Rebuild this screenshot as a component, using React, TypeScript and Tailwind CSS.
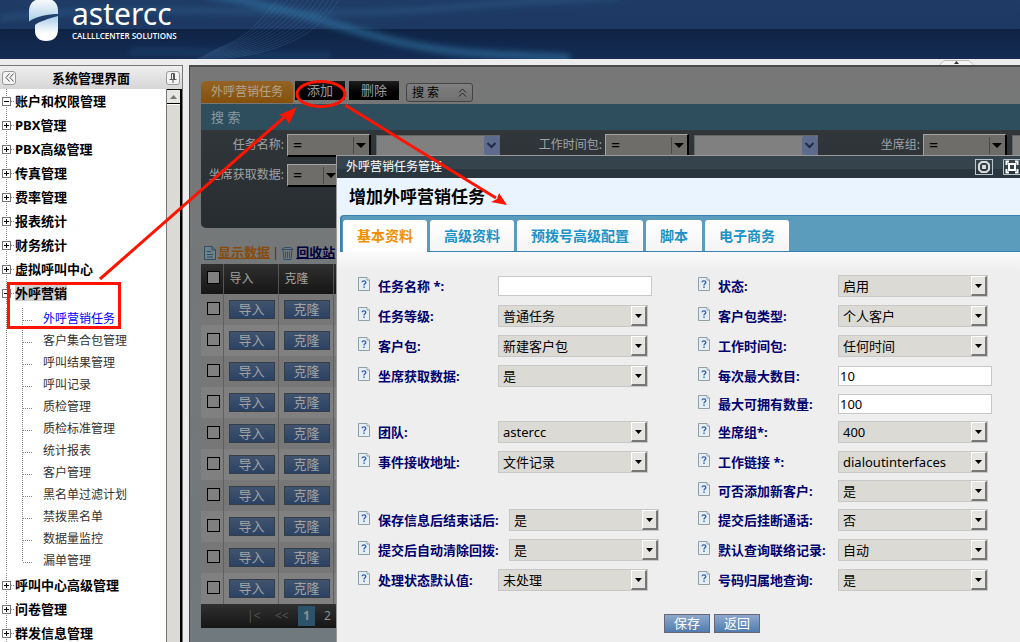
import React, { useState } from 'react';

interface Field {
  label: string;
  type: 'input' | 'select';
  value: string;
  wide?: boolean;
}

interface FormRow {
  height: string;
  left?: Field;
  right?: Field;
}

const topMenus = ['账户和权限管理', 'PBX管理', 'PBX高级管理', '传真管理', '费率管理', '报表统计', '财务统计', '虚拟呼叫中心'];
const bottomMenus = ['呼叫中心高级管理', '问卷管理', '群发信息管理'];
const subMenus = [
  '外呼营销任务',
  '客户集合包管理',
  '呼叫结果管理',
  '呼叫记录',
  '质检管理',
  '质检标准管理',
  '统计报表',
  '客户管理',
  '黑名单过滤计划',
  '禁拨黑名单',
  '数据量监控',
  '漏单管理',
];

const tabs = ['基本资料', '高级资料', '预拨号高级配置', '脚本', '电子商务'];

const rows: FormRow[] = [
  {
    height: 'h-[30px]',
    left: { label: '任务名称 *:', type: 'input', value: '' },
    right: { label: '状态:', type: 'select', value: '启用' },
  },
  {
    height: 'h-[30px]',
    left: { label: '任务等级:', type: 'select', value: '普通任务' },
    right: { label: '客户包类型:', type: 'select', value: '个人客户' },
  },
  {
    height: 'h-[30px]',
    left: { label: '客户包:', type: 'select', value: '新建客户包' },
    right: { label: '工作时间包:', type: 'select', value: '任何时间' },
  },
  {
    height: 'h-[30px]',
    left: { label: '坐席获取数据:', type: 'select', value: '是' },
    right: { label: '每次最大数目:', type: 'input', value: '10' },
  },
  { height: 'h-[26px]', right: { label: '最大可拥有数量:', type: 'input', value: '100' } },
  {
    height: 'h-[30px]',
    left: { label: '团队:', type: 'select', value: 'astercc' },
    right: { label: '坐席组*:', type: 'select', value: '400' },
  },
  {
    height: 'h-[30px]',
    left: { label: '事件接收地址:', type: 'select', value: '文件记录' },
    right: { label: '工作链接 *:', type: 'select', value: 'dialoutinterfaces' },
  },
  { height: 'h-[28px]', right: { label: '可否添加新客户:', type: 'select', value: '是' } },
  {
    height: 'h-[30px]',
    left: { label: '保存信息后结束话后:', type: 'select', value: '是', wide: true },
    right: { label: '提交后挂断通话:', type: 'select', value: '否' },
  },
  {
    height: 'h-[30px]',
    left: { label: '提交后自动清除回拨:', type: 'select', value: '是', wide: true },
    right: { label: '默认查询联络记录:', type: 'select', value: '自动' },
  },
  {
    height: 'h-[30px]',
    left: { label: '处理状态默认值:', type: 'select', value: '未处理' },
    right: { label: '号码归属地查询:', type: 'select', value: '是' },
  },
];

const Logo: React.FC = () => (
  <svg width="32" height="43" viewBox="0 0 32 43" className="shrink-0">
    <defs>
      <linearGradient id="logoTop" x1="0" y1="0" x2="0" y2="1">
        <stop offset="0" stopColor="#ffffff" />
        <stop offset="1" stopColor="#a9cde6" />
      </linearGradient>
      <linearGradient id="logoBottom" x1="0" y1="0" x2="0" y2="1">
        <stop offset="0" stopColor="#a9cbe8" />
        <stop offset="0.7" stopColor="#ffffff" />
      </linearGradient>
    </defs>
    <path d="M1 21.5V12C1 4 5-1 15-2C25-2 30 3 30 10V14C20 14 9 16 1 21.5Z" fill="url(#logoTop)" />
    <path d="M7 25C12 21 20 19 30 16V29C30 37 26 41 18 41C11 41 7 37 7 31Z" fill="url(#logoBottom)" />
  </svg>
);

const Banner: React.FC = () => (
  <header className="relative h-[59px] shrink-0 overflow-hidden bg-[linear-gradient(to_bottom,#1f3b66_0,#1d3862_29px,#0f2445_29px,#142b53_59px)]">
    <svg className="absolute inset-0 h-full w-full" viewBox="0 0 1020 59" preserveAspectRatio="none">
      <defs>
        <filter id="glow" x="-10%" y="-100%" width="120%" height="300%">
          <feGaussianBlur stdDeviation="3" />
        </filter>
      </defs>
      <g fill="none" stroke="#2f6f9c" filter="url(#glow)">
        <path d="M0 18C150 0 300 20 430 9S560 2 620 -4" strokeWidth="4" opacity="0.5" />
        <path d="M205 -6C270 4 300 14 364 33S470 54 570 58" strokeWidth="7" opacity="0.75" />
        <path d="M130 52C200 48 260 60 330 56" strokeWidth="5" opacity="0.3" />
      </g>
      <g fill="none" stroke="#5d8fbd" strokeWidth="0.7" opacity="0.3">
        {Array.from({ length: 13 }, (_, i) => (
          <path key={i} d={`M${340 - i * 5} -2C${322 - i * 5} ${26 - i} ${292 - i * 3} ${58 - i * 2} ${195 + i * 2} ${60 - i}`} />
        ))}
      </g>
    </svg>
    <div className="relative flex items-start pl-7">
      <Logo />
      <div className="pl-3 text-white">
        <div className="font-['Noto_Sans','Open_Sans',sans-serif] text-[30px] leading-[28px]">astercc</div>
        <div className="pt-[2px] font-['Open_Sans','Noto_Sans',sans-serif] text-[8px] font-semibold leading-[12px]">CALLLLCENTER SOLUTIONS</div>
      </div>
    </div>
  </header>
);

const TreeItem: React.FC<{ label: string; open?: boolean; selected?: boolean }> = ({ label, open, selected }) => (
  <li className="flex h-6 items-center">
    <svg width="15" height="24" className="shrink-0">
      <path d="M6.5 0V24M11 12.5H15" stroke="#888" strokeDasharray="1 1" />
      <rect x="2.5" y="8.5" width="8" height="8" fill="#fff" stroke="#777" />
      <path d={open ? 'M4 12.5H9' : 'M4 12.5H9M6.5 10V15'} stroke="#000" />
    </svg>
    <a href="#" className={`text-[13px] font-bold leading-[16px] text-black ${selected ? 'bg-[#cfcfcf]' : ''}`}>
      {label}
    </a>
  </li>
);

const Sidebar: React.FC = () => (
  <aside className="flex w-[183px] shrink-0 flex-col border-r border-t border-[#777] bg-white">
    <div className="flex h-[23px] shrink-0 items-center justify-between bg-linear-to-b from-[#efefef] to-[#d6d6d6] px-[2px]">
      <button aria-label="收起" className="flex h-[14px] w-[14px] items-center justify-center rounded-[3px] border border-[#999] bg-[#f3f3f3]">
        <svg width="9" height="9" fill="none" stroke="#555">
          <path d="M4.5 0.5L1 4.5L4.5 8.5M8.5 0.5L5 4.5L8.5 8.5" />
        </svg>
      </button>
      <h2 className="text-[13px] font-bold leading-[18px]">系统管理界面</h2>
      <button aria-label="固定" className="flex h-[14px] w-[14px] items-center justify-center rounded-[3px] border border-[#999] bg-[#f3f3f3]">
        <svg width="8" height="10" fill="none" stroke="#555">
          <path d="M2.5 6V0.5H5.5V6M4.5 1V6M0.5 6.5H7.5M4 7V10" />
        </svg>
      </button>
    </div>
    <div className="flex min-h-0 flex-1">
      <nav className="min-w-0 flex-1 overflow-hidden">
        <ul>
          {topMenus.map((m, i) => (
            <TreeItem key={m} label={m} open={i === 0} />
          ))}
          <TreeItem label="外呼营销" open selected />
        </ul>
        <ul className="pb-px pt-[3px]">
          {subMenus.map((m, i) => (
            <li key={m} className="flex h-[22px] items-center">
              <svg width="43" height="22" className="shrink-0">
                <path
                  d={i === subMenus.length - 1 ? 'M6.5 0V22M22.5 0V12M23 12.5H32' : 'M6.5 0V22M22.5 0V22M23 12.5H32'}
                  stroke="#888"
                  strokeDasharray="1 1"
                  fill="none"
                />
              </svg>
              <a href="#" className={`text-xs ${i === 0 ? 'text-[#0000ff]' : 'text-[#333]'}`}>
                {m}
              </a>
            </li>
          ))}
        </ul>
        <ul>
          {bottomMenus.map((m) => (
            <TreeItem key={m} label={m} />
          ))}
        </ul>
      </nav>
      <div className="w-[16px] shrink-0 border-l border-r-2 border-l-[#777] border-r-black bg-[#dbdad4]">
        <div className="flex h-[15px] items-center justify-center border-b border-t border-black bg-[#e6e5e0]">
          <svg width="7" height="4">
            <path d="M0 4L3.5 0L7 4Z" fill="#777" />
          </svg>
        </div>
        <div className="h-px bg-white" />
      </div>
    </div>
  </aside>
);

const DimSelect: React.FC<{ label: string; width: string }> = ({ label, width }) => (
  <span className={`relative flex h-[23px] shrink-0 ${width}`}>
    <select
      aria-label={label}
      className="w-full appearance-none border-b-2 border-l border-r-2 border-t border-b-black border-l-[#a5a39f] border-r-black border-t-[#a5a39f] bg-[#6f6d69] pl-[5px] text-base leading-[18px] text-black"
    >
      <option>=</option>
    </select>
    <svg width="18" height="19" className="pointer-events-none absolute right-0 top-[2px]">
      <path d="M0.5 1V18" stroke="#4a4a48" />
      <path d="M3 7H13L8 12Z" fill="#000" />
    </svg>
  </span>
);

const Combo: React.FC<{ label: string }> = ({ label }) => (
  <span className="relative flex h-[21px] w-[124px] shrink-0">
    <input aria-label={label} className="w-full border border-[#666] bg-[#808080] px-1 text-xs" />
    <span className="pointer-events-none absolute right-px top-px flex h-[19px] w-[15px] items-center justify-center rounded-[2px] bg-[#5d6b8c]">
      <svg width="9" height="7" fill="none" stroke="#202b45" strokeWidth="2">
        <path d="M0.5 1L4.5 5L8.5 1" />
      </svg>
    </span>
  </span>
);

const SearchField: React.FC<{ label: string }> = ({ label }) => (
  <div className="flex w-[318px] shrink-0 items-center">
    <span className="w-[83px] shrink-0 text-right text-xs text-[#a0a3a5]">{label}</span>
    <div className="flex items-center gap-[5px] pl-[3px]">
      <DimSelect label={`${label} 条件`} width="w-[84px]" />
      <Combo label={label} />
    </div>
  </div>
);

const TaskList: React.FC = () => (
  <table className="w-[800px] table-fixed border-collapse text-[13px] text-[#a3a3a3]">
    <colgroup>
      <col className="w-[22px]" />
      <col className="w-[55px]" />
      <col className="w-[55px]" />
      <col />
    </colgroup>
    <thead>
      <tr className="h-[30px] bg-linear-to-b from-[#303030] to-[#161616] text-left">
        <th className="border-r border-[#555] pb-[3px]">
          <input type="checkbox" aria-label="全选" className="ml-[6px] block h-[13px] w-[13px] appearance-none border border-black bg-[#808080]" />
        </th>
        <th className="border-r border-[#555] pl-[6px] text-xs font-normal">导入</th>
        <th className="border-r border-[#555] pl-[6px] text-xs font-normal">克隆</th>
        <th />
      </tr>
    </thead>
    <tbody>
      {Array.from({ length: 10 }, (_, i) => (
        <tr key={i} className="h-[31px] odd:bg-[#777] even:bg-[#808080]">
          <td className="border-r border-[#606060] pb-[3px]">
            <input type="checkbox" aria-label={`选择第${i + 1}行`} className="ml-[6px] block h-[13px] w-[13px] appearance-none border border-black bg-[#808080]" />
          </td>
          {['导入', '克隆'].map((t) => (
            <td key={t} className="border-r border-[#606060] pb-px pl-[5px]">
              <button className="block h-[19px] w-[46px] border border-[#353d47] bg-linear-to-b from-[#41546f] to-[#2b4264] text-[13px] leading-[17px]">{t}</button>
            </td>
          ))}
          <td />
        </tr>
      ))}
    </tbody>
  </table>
);

const Background: React.FC = () => (
  <div className="pl-[11px] pt-[14px]">
    <div className="flex h-[23px] items-start">
      <button className="h-[22px] w-[92px] rounded-t-[5px] bg-linear-to-b from-[#946323] to-[#85500a] text-xs text-[#b3a48f]">外呼营销任务</button>
      <button className="ml-[2px] h-[19px] w-[50px] bg-linear-to-b from-[#1e1e1e] to-black text-[13px] leading-[19px] text-[#9c9c9c]">添加</button>
      <button className="ml-1 h-[19px] w-[50px] bg-linear-to-b from-[#1e1e1e] to-black text-[13px] leading-[19px] text-[#9c9c9c]">删除</button>
      <button className="ml-[7px] mt-[2px] flex h-[19px] w-[67px] items-center justify-between rounded-[3px] border border-[#444] bg-linear-to-b from-[#808080] to-[#707070] px-[5px] text-xs text-black">
        搜 索
        <svg width="9" height="9" fill="none" stroke="#222">
          <path d="M1 4.5L4.5 1L8 4.5M1 8.5L4.5 5L8 8.5" />
        </svg>
      </button>
    </div>
    <section className="h-[124px] w-[1200px] rounded-bl-[5px] bg-linear-to-b from-[#34393e] to-[#262c30]">
      <h3 className="h-[26px] bg-[#2e4d5d] pl-[10px] text-[13px] leading-[26px] text-[#8b9aa2]">搜 索</h3>
      <div className="flex h-[30px] items-center">
        <SearchField label="任务名称:" />
        <SearchField label="工作时间包:" />
        <SearchField label="坐席组:" />
      </div>
      <div className="flex h-[30px] items-center">
        <span className="w-[83px] shrink-0 text-right text-xs text-[#a0a3a5]">坐席获取数据:</span>
        <div className="flex pl-[3px]">
          <DimSelect label="坐席获取数据 条件" width="w-[54px]" />
        </div>
      </div>
    </section>
    <div className="flex h-[36px] items-end gap-[2px] pb-[2px] pl-[3px] text-[13px] font-bold leading-[20px]">
      <svg width="12" height="14" viewBox="0 0 12 14" fill="#708088" stroke="#2c4f65" className="mb-[2px]">
        <path d="M0.5 0.5H8L11.5 4V13.5H0.5ZM8 0.5V4H11.5M3 5.5H7M3 8.5H9M3 11H9" />
      </svg>
      <a href="#" className="text-[#8a4a08] underline">显示数据</a>
      <span className="font-normal text-[#6d2020]">|</span>
      <svg width="13" height="14" viewBox="0 0 13 14" fill="none" stroke="#2e5268" className="mb-[2px]">
        <path d="M0.5 3.5H12.5M1.5 2.5L4 1.5H9L11.5 2.5M2 4L3 13.5H10L11 4M4.5 5.5V12M6.5 5.5V12M8.5 5.5V12" />
      </svg>
      <a href="#" className="text-[#00003c] underline">回收站</a>
    </div>
    <TaskList />
    <div className="flex h-6 w-[800px] items-center bg-linear-to-b from-[#303030] to-[#161616] pl-[46px] text-xs text-[#8f8f8f]">
      <a href="#" className="w-[28px] text-[#555]">|&lt;</a>
      <a href="#" className="w-[23px] text-[#555]">&lt;&lt;</a>
      <a href="#" className="flex h-5 w-[17px] items-center justify-center bg-[#2c536b] font-bold">1</a>
      <a href="#" className="w-[25px] text-center">2</a>
    </div>
  </div>
);

const HelpIcon: React.FC = () => (
  <svg width="13" height="14" viewBox="0 0 13 14" className="mb-1 shrink-0">
    <path d="M0.5 0.5H9L11.5 3V13.5H0.5Z" fill="#e6eef2" stroke="#8f9fa8" />
    <path d="M9 0.5V3H11.5" fill="#fff" stroke="#8f9fa8" />
    <path d="M4 5.2C4.2 3.4 7.8 3.4 7.8 5.4C7.8 6.8 6 6.8 6 8.4M6 9.6V11" fill="none" stroke="#2c5cb8" strokeWidth="1.3" />
  </svg>
);

const FormField: React.FC<{ field?: Field; id: string }> = ({ field, id }) => {
  const [value, setValue] = useState(field?.value ?? '');
  if (!field) return <div className="w-[340px] shrink-0" />;
  return (
    <div className="flex w-[340px] shrink-0 items-center">
      <HelpIcon />
      <label
        htmlFor={id}
        className={`ml-[7px] shrink-0 whitespace-nowrap pb-px text-[13px] font-bold leading-[18px] text-[#00006e] ${field.wide ? 'w-[131px]' : 'w-[120px]'}`}
      >
        {field.label}
      </label>
      {field.type === 'input' ? (
        <input
          id={id}
          value={value}
          onChange={(e) => setValue(e.target.value)}
          className="mb-px h-5 w-[154px] border border-[#c8c8c8] bg-white px-px text-[13px] text-black"
        />
      ) : (
        <span className="relative flex h-[22px] w-[150px]">
          <select id={id} className="w-full appearance-none border border-[#c8c8c8] bg-[#dbdad4] pl-1 text-[13px] leading-[18px] text-black">
            <option>{field.value}</option>
          </select>
          <span className="pointer-events-none absolute right-px top-px flex h-5 w-4 items-center justify-center border-b-2 border-l border-r-2 border-t border-b-[#777] border-l-white border-r-[#777] border-t-white bg-[#e6e5e1]">
            <svg width="7" height="4">
              <path d="M0 0H7L3.5 4Z" fill="#000" />
            </svg>
          </span>
        </span>
      )}
    </div>
  );
};

const Dialog: React.FC = () => {
  const [active, setActive] = useState(0);

  return (
    <div role="dialog" aria-label="外呼营销任务管理" className="absolute bottom-0 left-[146px] right-0 top-[88px] flex flex-col overflow-hidden border-l border-t border-[#999] bg-[#eee]">
      <div className="flex h-[22px] shrink-0 items-center justify-between bg-[linear-gradient(to_bottom,#35434c_0,#35434c_13px,#2a363e_13px)] pl-[9px]">
        <span className="text-xs text-white">外呼营销任务管理</span>
        <div className="flex gap-[10px]">
          <button aria-label="最小化">
            <svg width="18" height="16" fill="none" stroke="#b8c6d0">
              <rect x="0.5" y="0.5" width="17" height="15" />
              <path d="M6.5 3H11.5L14 5.5V10.5L11.5 13H6.5L4 10.5V5.5Z" stroke="#d8d8d8" strokeWidth="2" />
              <rect x="7" y="6" width="4" height="4" fill="#d8d8d8" stroke="none" />
            </svg>
          </button>
          <button aria-label="最大化">
            <svg width="17" height="16" fill="none" stroke="#b8c6d0">
              <path d="M17 0.5H0.5V15.5H17" />
              <path d="M3.5 6V2.5H6M12 2.5H14.5V6M14.5 10V13.5H12M6 13.5H3.5V10" stroke="#fff" strokeWidth="2" />
              <rect x="6" y="5" width="6" height="6" stroke="#fff" strokeWidth="2" />
            </svg>
          </button>
        </div>
      </div>
      <h1 className="h-[37px] shrink-0 bg-[#e9f4ff] pl-[12px] text-[17px] font-bold leading-[37px] text-black">增加外呼营销任务</h1>
      <div className="ml-[3px] flex h-[37px] shrink-0 items-end gap-[3px] rounded-tl-[4px] border-b border-l-2 border-t border-[#3a80b2] bg-[#5b9bbc] pl-px">
        {tabs.map((t, i) => (
          <button
            key={t}
            onClick={() => setActive(i)}
            className={`h-[31px] rounded-t-[3px] px-[14px] text-sm font-bold ${
              active === i ? 'mb-[-1px] h-[32px] bg-white text-[#f09000]' : 'bg-linear-to-b from-white to-[#f4f4f4] text-[#1c92c6]'
            }`}
          >
            {t}
          </button>
        ))}
      </div>
      <form className="flex-1 bg-[linear-gradient(to_bottom,#fafafa_0,#eee_20px)] pl-[21px] pt-[19px]" onSubmit={(e) => e.preventDefault()}>
        {rows.map((r, i) => (
          <div key={i} className={`flex items-center ${r.height}`}>
            <FormField field={r.left} id={`left-${i}`} />
            <FormField field={r.right} id={`right-${i}`} />
          </div>
        ))}
        <div className="flex gap-1 pl-[306px] pt-[19px]">
          {['保存', '返回'].map((t) => (
            <button key={t} className="h-[19px] w-[46px] border border-[#667] bg-linear-to-b from-[#8ea8cc] to-[#517caf] text-[13px] leading-[17px] text-white">
              {t}
            </button>
          ))}
        </div>
      </form>
    </div>
  );
};

// Red guide marks: click the menu, click "add", the dialog opens
const GuideMarks: React.FC = () => (
  <svg className="pointer-events-none absolute left-0 top-0" width="520" height="340" fill="none" stroke="#ff1400">
    <rect x="8.5" y="283.5" width="111" height="44" strokeWidth="3" />
    <ellipse cx="321" cy="94" rx="24" ry="12.5" strokeWidth="3" />
    <path d="M100 279L288 114M345 105L496 198" strokeWidth="3" />
    <path d="M297 107L279 115L285 117L289 124ZM507 205L499 193L497 199L491 202Z" fill="#ff1400" stroke="none" />
  </svg>
);

export default function App() {
  return (
    <div className="relative flex h-screen flex-col overflow-hidden bg-[#ececec] font-['Noto_Sans','Noto_Sans_CJK_SC',sans-serif]">
      <Banner />
      <div className="flex h-[6px] shrink-0 justify-end pr-[46px]">
        <svg width="35" height="6">
          <path d="M0.5 6L5 1.5H30L34.5 6" fill="#f4f4f4" stroke="#bbb" />
          <path d="M15 5L17.5 2L20 5Z" fill="#333" />
        </svg>
      </div>
      <div className="flex min-h-0 flex-1 gap-[6px]">
        <Sidebar />
        <main className="relative min-w-0 flex-1 overflow-hidden border-l border-t-2 border-[#4a4a4a] bg-linear-to-b from-[#777] to-[#70797d]">
          <Background />
          <Dialog />
        </main>
      </div>
      <GuideMarks />
    </div>
  );
}
